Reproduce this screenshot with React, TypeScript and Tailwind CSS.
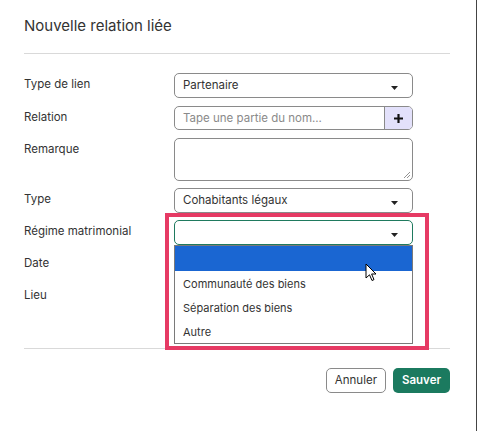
function Caret() {
  return (
    <svg width="7" height="4" viewBox="0 0 7 4" className="absolute right-[14px] top-[12px]">
      <path d="M0 0 H7 L3.5 4 Z" fill="#222" />
    </svg>
  );
}

function Row({
  label,
  children,
  h = 25,
  mt = 0,
}: {
  label: string;
  children?: React.ReactNode;
  h?: number;
  mt?: number;
}) {
  return (
    <div className="flex items-start" style={{ minHeight: h, marginTop: mt }}>
      <div className="w-[150px] pt-[4px] text-[11.5px] text-[#333] leading-[14px]">{label}</div>
      <div className="w-[239px]">{children}</div>
    </div>
  );
}

export default function App() {
  return (
    <div className="relative w-[477px] h-[431px] bg-white border-r border-[#444] font-['Inter','Liberation_Sans',sans-serif] text-[#333] overflow-hidden">
      {/* Header */}
      <div className="pl-6 pr-[26px]">
        <h1 className="pt-[17px] text-[15px] leading-[18px] text-[#333]">Nouvelle relation liée</h1>
        <div className="mt-[18px] border-t border-[#d9d9d9]" />
      </div>

      {/* Form */}
      <div className="pl-6 pt-[19px] flex flex-col">
        <Row label="Type de lien">
          <div className="relative h-[25px] rounded-[5px] border border-[#8a8a8a] px-[8px] text-[11.5px] leading-[23px]">
            Partenaire
            <Caret />
          </div>
        </Row>
        <Row label="Relation" h={24} mt={8}>
          <div className="flex h-[24px] rounded-[5px] border border-[#8a8a8a] overflow-hidden">
            <div className="flex-1 px-[8px] text-[11.5px] leading-[22px] text-[#8a8a8a]">Tape une partie du nom...</div>
            <div className="w-[28px] bg-[#e3e1fb] border-l border-[#8a8a8a] flex items-center justify-center">
              <svg width="9" height="9" viewBox="0 0 10 10">
                <path d="M3.8 0 H6.2 V3.8 H10 V6.2 H6.2 V10 H3.8 V6.2 H0 V3.8 H3.8 Z" fill="#111" />
              </svg>
            </div>
          </div>
        </Row>
        <Row label="Remarque" h={43} mt={8}>
          <div className="relative h-[43px] rounded-[5px] border border-[#8a8a8a]">
            <svg width="7" height="7" viewBox="0 0 7 7" className="absolute right-[2px] bottom-[2px]">
              <path d="M1 7 L7 1 M4 7 L7 4" stroke="#777" strokeWidth="0.8" />
            </svg>
          </div>
        </Row>
        <Row label="Type" mt={7}>
          <div className="relative h-[25px] rounded-[5px] border border-[#8a8a8a] px-[8px] text-[11.5px] leading-[23px]">
            Cohabitants légaux
            <Caret />
          </div>
        </Row>
        <Row label="Régime matrimonial" mt={7}>
          <div className="relative h-[25px] rounded-[5px] border border-[#1f7a5e]">
            <Caret />
          </div>
        </Row>
        <Row label="Date" mt={7} />
        <Row label="Lieu" mt={7} />
      </div>

      {/* Footer */}
      <div className="pl-6 pr-[26px]">
        <div className="mt-[39px] border-t border-[#d9d9d9]" />
        <div className="flex justify-end gap-[7px] pt-[19px]">
          <button className="h-[25px] px-[8px] rounded-[5px] border border-[#8a8a8a] bg-white text-[11.5px] text-[#333]">
            Annuler
          </button>
          <button className="h-[25px] px-[9px] rounded-[5px] bg-[#1b7a5f] text-[11.5px] font-semibold text-white">
            Sauver
          </button>
        </div>
      </div>

      {/* Open dropdown list */}
      <div className="absolute left-[174px] top-[245px] w-[239px] h-[99px] bg-white border border-[#7a7a7a] text-[11px] text-[#333]">
        <div className="h-[25px] bg-[#1a66d2]" />
        <div className="px-[8px] h-[24px] leading-[24px] mt-[1px]">Communauté des biens</div>
        <div className="px-[8px] h-[24px] leading-[24px]">Séparation des biens</div>
        <div className="px-[8px] h-[24px] leading-[24px]">Autre</div>
      </div>

      {/* Highlight frame */}
      <div className="absolute left-[165px] top-[213px] w-[264px] h-[137px] border-[4px] border-[#e63a64] pointer-events-none" />

      {/* Mouse cursor */}
      <svg width="13" height="19" viewBox="0 0 13 19" className="absolute left-[365px] top-[263px]">
        <path d="M1 1 L1 15 L4.5 11.8 L7 17.5 L9 16.6 L6.6 11 L11 11 Z" fill="#fff" stroke="#000" strokeWidth="1" strokeLinejoin="round" />
      </svg>
    </div>
  );
}
